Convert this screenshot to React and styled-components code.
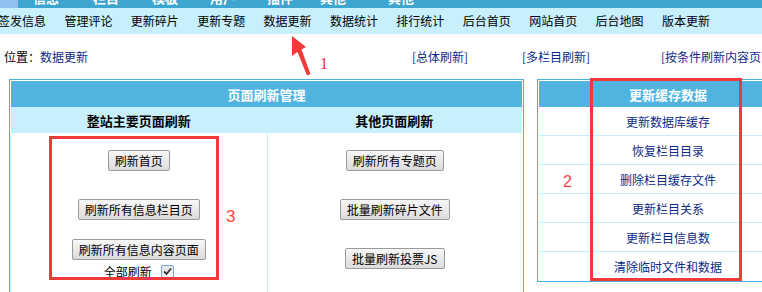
import React from "react";
import styled, { createGlobalStyle } from "styled-components";

const GlobalStyle = createGlobalStyle`
  html, body {
    margin: 0;
    padding: 0;
    background: #fff;
    overflow: hidden;
  }
  body {
    font-family: "Noto Sans CJK SC", "Liberation Sans", sans-serif;
    font-size: 12px;
    color: #000;
  }
`;

const Page = styled.div`
  position: relative;
  width: 762px;
  height: 292px;
  overflow: hidden;
`;

const TopBar = styled.div`
  display: flex;
  height: 8px;
  overflow: hidden;
  background: #3ca6d0;
`;
const TopCorner = styled.div`
  width: 18px;
  flex: none;
  background: #8fc0ee;
`;
const TopItem = styled.div`
  flex: none;
  width: ${({ $w }) => $w}px;
  margin-left: ${({ $ml }) => $ml || 0}px;
  margin-top: -10px;
  color: #fff;
  font-weight: bold;
  font-size: 13px;
  line-height: 16px;
`;

const MenuBar = styled.div`
  display: flex;
  height: 26px;
  align-items: center;
  background: #c7effc;
  padding-left: 0;
  margin-left: -2px;
`;
const MenuItem = styled.a`
  flex: 0 0 66.4px;
  font-size: 12px;
  line-height: 14px;
  color: #000;
  white-space: nowrap;
`;

const PositionRow = styled.div`
  display: flex;
  align-items: center;
  height: 45px;
  white-space: nowrap;
`;
const Location = styled.div`
  flex: none;
  width: 408px;
  padding-left: 4px;
`;
const NavLink = styled.a`
  color: #0d2a86;
`;
const Cell = styled.div`
  flex: none;
  width: ${({ $w }) => $w}px;
`;

const PanelRow = styled.div`
  display: flex;
  align-items: flex-start;
  gap: 13px;
  padding-left: 9px;
`;
const Panel = styled.div`
  flex: none;
  box-sizing: border-box;
  width: ${({ $w }) => $w}px;
  border: 1px solid #4db1de;
  padding: 1px;
  background: #fff;
`;
const PanelHead = styled.div`
  height: 26px;
  display: flex;
  align-items: center;
  justify-content: center;
  background: #50b4df;
  color: #fff;
  font-weight: bold;
  font-size: 13px;
`;
const SubHead = styled.div`
  display: grid;
  grid-template-columns: 1fr 1fr;
  height: 26px;
  background: #c7effc;
  font-weight: bold;
  font-size: 13px;
  align-items: center;
  text-align: center;
`;
const Body = styled.div`
  display: grid;
  grid-template-columns: 1fr 1fr;
  border-left: 1px solid #cdeefa;
  margin-left: -1px;
`;
const Column = styled.div`
  display: flex;
  flex-direction: column;
  padding: 3px 0 20px;
  border-left: ${({ $divider }) => ($divider ? "1px solid #c6eaf8" : "none")};
`;
const Slot = styled.div`
  height: 49px;
  display: flex;
  flex-direction: column;
  align-items: center;
  justify-content: center;
`;
const Button = styled.button`
  height: 21px;
  padding: 0 6px;
  font-family: "Noto Sans CJK SC", sans-serif;
  font-size: 12px;
  line-height: 19px;
  color: #000;
  border: 1px solid #9b9b9b;
  border-radius: 2px;
  background: linear-gradient(#f7f7f7, #dcdcdc);
  white-space: nowrap;
`;
const CheckLine = styled.label`
  display: flex;
  align-items: center;
  gap: 9px;
  margin-top: 5px;
  height: 14px;
  line-height: 14px;
`;
const CheckBox = styled.span`
  box-sizing: border-box;
  width: 13px;
  height: 13px;
  border: 1px solid #7fa6dc;
  border-radius: 2px;
  background: linear-gradient(#e4e4e4, #f6f6f6);
  display: flex;
  align-items: center;
  justify-content: center;
`;

const LinkRow = styled.div`
  height: 28px;
  display: flex;
  align-items: center;
  justify-content: center;
  border-bottom: ${({ $last }) => ($last ? "none" : "1px solid #c8ecf9")};
  color: #0d2a86;
  font-size: 12px;
`;

const RedBox = styled.div`
  position: absolute;
  box-sizing: border-box;
  left: ${({ $x }) => $x}px;
  top: ${({ $y }) => $y}px;
  width: ${({ $w }) => $w}px;
  height: ${({ $h }) => $h}px;
  border: 3px solid #f03a3a;
  pointer-events: none;
`;
const Mark = styled.span`
  position: absolute;
  left: ${({ $x }) => $x}px;
  top: ${({ $y }) => $y}px;
  font-family: ${({ $serif }) =>
    $serif ? '"Liberation Serif", serif' : '"Liberation Sans", sans-serif'};
  font-size: ${({ $size }) => $size}px;
  line-height: 1;
  color: ${({ $serif }) => ($serif ? "#ee2a5a" : "#f44")};
`;
const Arrow = styled.svg`
  position: absolute;
  left: 0;
  top: 0;
  pointer-events: none;
`;

const topItems = [
  { t: "信息", w: 60, ml: 15 },
  { t: "栏目", w: 59 },
  { t: "模板", w: 58 },
  { t: "用户", w: 57 },
  { t: "插件", w: 53 },
  { t: "其他", w: 68 },
  { t: "其他", w: 60 },
];
const menu = [
  "签发信息",
  "管理评论",
  "更新碎片",
  "更新专题",
  "数据更新",
  "数据统计",
  "排行统计",
  "后台首页",
  "网站首页",
  "后台地图",
  "版本更新",
];
const cacheLinks = [
  "更新数据库缓存",
  "恢复栏目目录",
  "删除栏目缓存文件",
  "更新栏目关系",
  "更新栏目信息数",
  "清除临时文件和数据",
];

export default function App() {
  return (
    <Page>
      <GlobalStyle />
      <TopBar>
        <TopCorner />
        {topItems.map((it, i) => (
          <TopItem key={i} $w={it.w} $ml={it.ml}>
            {it.t}
          </TopItem>
        ))}
      </TopBar>
      <MenuBar>
        {menu.map((m) => (
          <MenuItem key={m}>{m}</MenuItem>
        ))}
      </MenuBar>
      <PositionRow>
        <Location>
          位置：<NavLink>数据更新</NavLink>
        </Location>
        <Cell $w={110}>
          <NavLink>[总体刷新]</NavLink>
        </Cell>
        <Cell $w={139}>
          <NavLink>[多栏目刷新]</NavLink>
        </Cell>
        <Cell $w={140}>
          <NavLink>[按条件刷新内容页面]</NavLink>
        </Cell>
      </PositionRow>

      <PanelRow>
        <Panel $w={515}>
          <PanelHead>页面刷新管理</PanelHead>
          <SubHead>
            <div>整站主要页面刷新</div>
            <div>其他页面刷新</div>
          </SubHead>
          <Body>
            <Column>
              <Slot>
                <Button>刷新首页</Button>
              </Slot>
              <Slot>
                <Button>刷新所有信息栏目页</Button>
              </Slot>
              <Slot>
                <Button>刷新所有信息内容页面</Button>
                <CheckLine>
                  全部刷新
                  <CheckBox>
                    <svg width="9" height="9" viewBox="0 0 9 9">
                      <path
                        d="M1 4.5 L3.5 7 L8 1.5"
                        fill="none"
                        stroke="#333"
                        strokeWidth="1.8"
                      />
                    </svg>
                  </CheckBox>
                </CheckLine>
              </Slot>
            </Column>
            <Column $divider>
              <Slot>
                <Button>刷新所有专题页</Button>
              </Slot>
              <Slot>
                <Button>批量刷新碎片文件</Button>
              </Slot>
              <Slot>
                <Button>批量刷新投票JS</Button>
              </Slot>
            </Column>
          </Body>
        </Panel>

        <Panel $w={262}>
          <PanelHead>更新缓存数据</PanelHead>
          {cacheLinks.map((l, i) => (
            <LinkRow key={l} $last={i === cacheLinks.length - 1}>
              {l}
            </LinkRow>
          ))}
        </Panel>
      </PanelRow>

      {/* annotations drawn over the screenshot */}
      <Arrow width="762" height="292">
        <polygon
          points="292,36 306,47 301.5,49.5 310.5,74 307,75.5 297.5,52 292,56"
          fill="#f23a3a"
        />
      </Arrow>
      <Mark $serif $x={320} $y={56} $size={16}>
        1
      </Mark>
      <RedBox $x={590} $y={78} $w={152} $h={203} />
      <Mark $x={563} $y={174} $size={16}>
        2
      </Mark>
      <RedBox $x={49} $y={136} $w={170} $h={144} />
      <Mark $x={226} $y={208} $size={17}>
        3
      </Mark>
    </Page>
  );
}
